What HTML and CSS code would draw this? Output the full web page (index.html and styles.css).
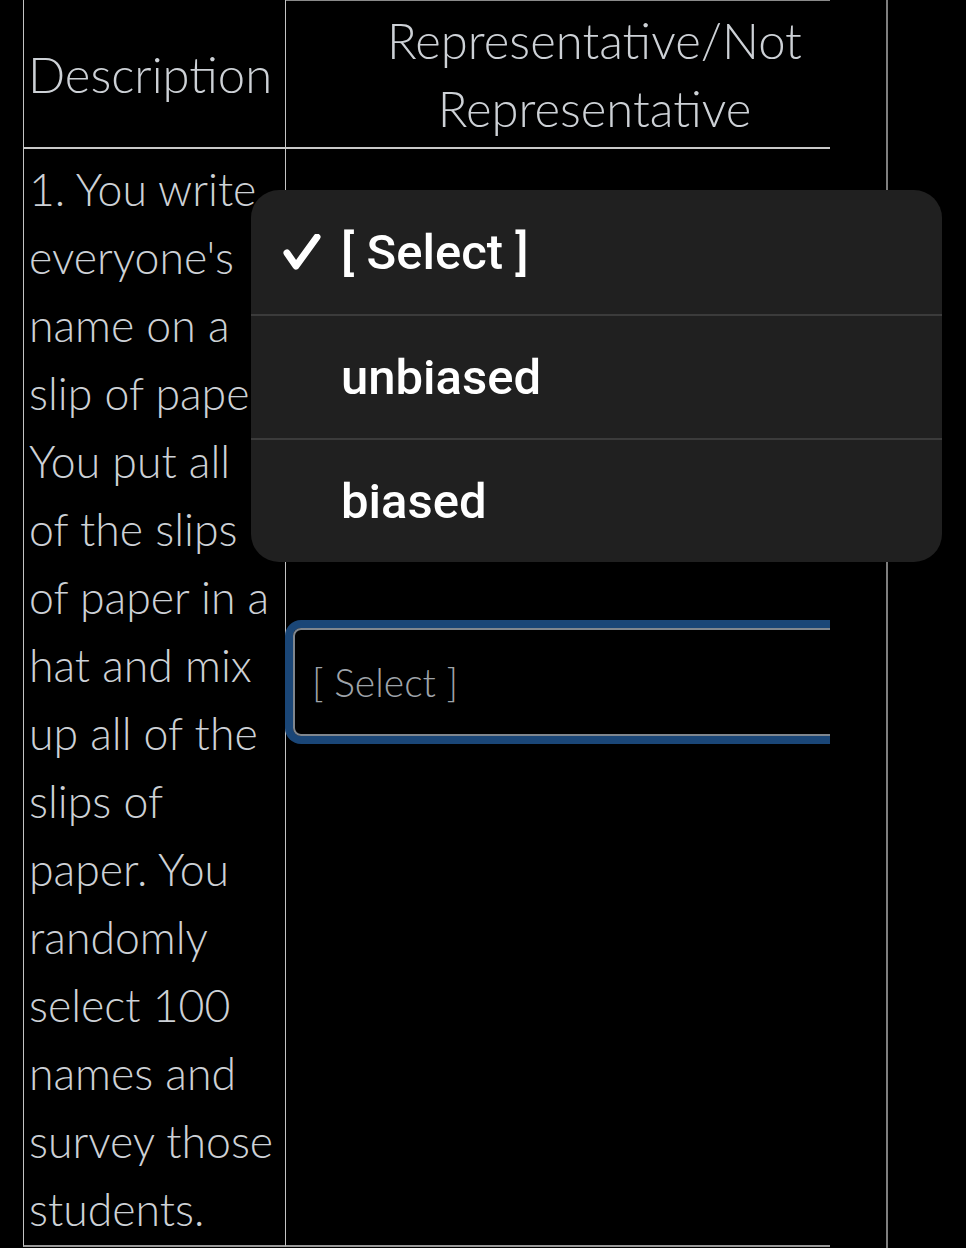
FILE: index.html
```html
<!DOCTYPE html>
<html lang="en">
<head>
    <meta charset="UTF-8">
    <meta name="viewport" content="width=device-width, initial-scale=1.0">
    <title>Sampling Quiz</title>
    <link rel="stylesheet" href="styles.css">
</head>
<body>
    <div class="frame">
        <div class="scroller">
            <table class="quiz">
                <thead>
                    <tr>
                        <th class="desc-head">Description</th>
                        <th class="answer-head">Representative/Not<br>Representative</th>
                    </tr>
                </thead>
                <tbody>
                    <tr>
                        <td class="desc">1. You write<br>everyone's<br>name on a<br>slip of paper.<br>You put all<br>of the slips<br>of paper in a<br>hat and mix<br>up all of the<br>slips of<br>paper. You<br>randomly<br>select 100<br>names and<br>survey those<br>students.</td>
                        <td class="answer">
                            <div class="select-box">[ Select ]</div>
                        </td>
                    </tr>
                </tbody>
            </table>
        </div>
    </div>

    <div class="picker">
        <div class="picker-item">
            <span class="check">
                <svg width="38" height="36" viewBox="0 0 38 36"><path d="M4 19 L13 32 L34 3" fill="none" stroke="#fff" stroke-width="7" stroke-linecap="round" stroke-linejoin="round"/></svg>
            </span>
            [ Select ]
        </div>
        <div class="picker-item">
            <span class="check"></span>
            unbiased
        </div>
        <div class="picker-item">
            <span class="check"></span>
            biased
        </div>
    </div>
</body>
</html>
```

FILE: styles.css
```css
body {
    margin: 0;
    background-color: #000;
    width: 966px;
    height: 1248px;
    overflow: hidden;
    position: relative;
    font-family: "Lato Light", Lato, "Open Sans", sans-serif;
    color: #cdd1d6;
}
.frame {
    width: 888px;
    height: 1248px;
    padding-left: 23px;
    box-sizing: border-box;
    border-right: 2px solid #7e7e7e;
}
.scroller {
    width: 807px;
    overflow: hidden;
}
.quiz {
    border-collapse: separate;
    border-spacing: 0;
    table-layout: fixed;
    width: 880px;
    font-weight: 300;
}
th {
    font-weight: 300;
    font-size: 49px;
    line-height: 68px;
    padding: 5px 4px;
    border-bottom: 2px solid #c9c9c9;
    white-space: nowrap;
}
.desc-head {
    width: 253px;
    text-align: left;
    border-left: 1px solid #c4c4c4;
    border-right: 1px solid #c4c4c4;
}
.answer-head {
    text-align: center;
    border-top: 1px solid #8a8a8a;
}
.desc {
    font-size: 44.6px;
    line-height: 68px;
    padding: 6px 0 2px 5px;
    border-left: 1px solid #c4c4c4;
    border-right: 1px solid #c4c4c4;
    border-bottom: 2px solid #9a9a9a;
    vertical-align: top;
    white-space: nowrap;
    overflow: hidden;
}
.answer {
    vertical-align: top;
    padding: 479px 0 0 7px;
    border-bottom: 2px solid #9a9a9a;
}
.select-box {
    width: 600px;
    height: 108px;
    box-sizing: border-box;
    border: 2px solid #7f868e;
    border-radius: 8px;
    box-shadow: 0 0 0 8px #1a4677;
    display: flex;
    align-items: center;
    padding-left: 17px;
    font-size: 39px;
    color: #9fa4aa;
}
.picker {
    position: absolute;
    left: 251px;
    top: 190px;
    width: 691px;
    background-color: #202020;
    border-radius: 28px;
    overflow: hidden;
    font-family: Roboto, "Liberation Sans", sans-serif;
    font-weight: 500;
    font-size: 49px;
    color: #fff;
}
.picker-item {
    height: 124px;
    box-sizing: border-box;
    display: flex;
    align-items: center;
    padding-left: 32px;
}
.picker-item + .picker-item {
    border-top: 2px solid #3b3b3b;
}
.check {
    width: 58px;
    display: flex;
    align-items: center;
}
```
